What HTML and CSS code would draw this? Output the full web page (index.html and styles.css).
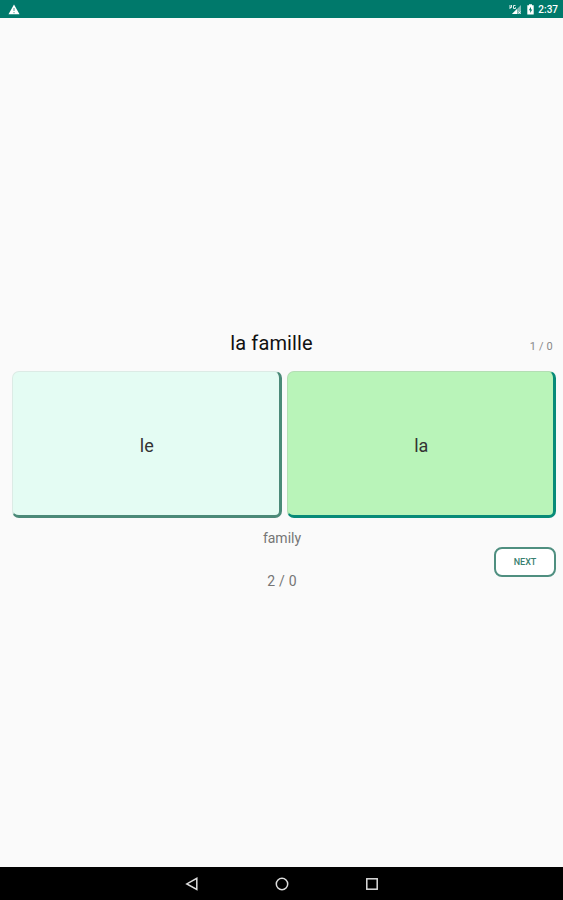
FILE: index.html
```
<!DOCTYPE html>
<html lang="fr">

  <head>
    <meta charset="utf-8">
    <title>la famille</title>
    <link rel="stylesheet" href="styles.css">
  </head>

  <body>
    <div class="statusbar">
      <svg class="warning" width="12" height="11" viewBox="0 0 12 11">
        <path d="M6 0.5L11.5 10.3H0.5Z" fill="#fff"/>
        <path d="M6 4v3M6 8v1.2" stroke="#66aaa2" stroke-width="1.2"/>
      </svg>
      <div class="status">
        <svg width="13" height="11" viewBox="0 0 13 11">
          <path d="M12 1V10H3Z" fill="#80bbb5"/>
          <path d="M8 5V10H3Z" fill="#fff"/>
          <path d="M1 1v4M1 3.5h1.5V1M6.5 1.5H4.5v3h2V3.3" fill="none" stroke="#e0f0ee" stroke-width="1"/>
          <path d="M9.5 7.5l2 2M11.5 7.5l-2 2" stroke="#fff" stroke-width="0.8"/>
        </svg>
        <svg class="battery" width="7" height="11" viewBox="0 0 7 11">
          <path d="M2 0.3h3v1h1.7v9.2H0.3V1.3H2Z" fill="#fff"/>
          <path d="M4 2.8L1.8 6.3H3.2V9L5.3 5.4H4Z" fill="#00796b"/>
        </svg>
        <span class="time">2:37</span>
      </div>
    </div>

    <div class="quiz">
      <div class="top">
        <h1>la famille</h1>
        <span class="score">1 / 0</span>
      </div>

      <div class="answers">
        <button class="answer le">le</button>
        <button class="answer la">la</button>
      </div>

      <div class="bottom">
        <div class="result">
          <p class="translation">family</p>
          <p class="count">2 / 0</p>
        </div>
        <button class="next">NEXT</button>
      </div>
    </div>

    <div class="navbar">
      <svg width="14" height="14" viewBox="0 0 14 14"><path d="M11.8 1.3V12.4L1.8 6.9Z"/></svg>
      <svg width="14" height="14" viewBox="0 0 14 14"><circle cx="7" cy="7" r="5.7"/></svg>
      <svg width="14" height="14" viewBox="0 0 14 14"><rect x="1.8" y="1.8" width="10.4" height="10.4"/></svg>
    </div>
  </body>
</html>
```
FILE: styles.css
```
body {
  display: flex;
  flex-direction: column;
  height: 900px;
  margin: 0;
  background-color: #fafafa;
  font-family: Roboto, sans-serif;
}

h1, p {
  margin: 0;
  font-weight: normal;
}

button {
  box-sizing: border-box;
  padding: 0;
  font-family: inherit;
}

.statusbar {
  display: flex;
  justify-content: space-between;
  align-items: center;
  box-sizing: border-box;
  height: 18px;
  padding: 0 5px 0 8px;
  background-color: #00796b;
}

.status {
  display: flex;
  align-items: center;
}

.battery {
  margin: 0 4px 0 5px;
}

.time {
  padding-top: 1px;
  color: white;
  font-size: 10px;
  font-weight: 500;
  line-height: 17px;
}

.quiz {
  flex: 1;
  padding: 312px 7px 0 12px;
}

.top {
  display: grid;
  grid-template-columns: 60px 1fr 60px;
  height: 41px;
}

.top h1 {
  grid-column: 2;
  color: #111;
  font-size: 20px;
  line-height: 26px;
  letter-spacing: 0.1px;
  text-align: center;
  margin-right: 25px;
}

.score {
  padding: 10px 3px 0 0;
  color: #888;
  font-size: 11px;
  line-height: 14px;
  letter-spacing: 0.2px;
  text-align: right;
}

.answers {
  display: grid;
  grid-template-columns: 1fr 1fr;
  gap: 5px;
}

.answer {
  height: 147px;
  padding: 4px 0 0 2px;
  border-style: solid;
  border-width: 1px 3px 3px 1px;
  border-radius: 7px;
  color: #333;
  font-size: 18px;
}

.le {
  background-color: #e4fcf3;
  border-color: #dcebe5 #4b8a78 #4b8a78 #dcebe5;
}

.la {
  background-color: #b9f4b9;
  border-color: #b4deb4 #078b78 #078b78 #b4deb4;
}

.bottom {
  display: grid;
  grid-template-columns: 62px 1fr 62px;
}

.result {
  grid-column: 2;
  padding-top: 10px;
  color: #757575;
  text-align: center;
}

.translation {
  margin-right: 4px;
  font-size: 14px;
  line-height: 20px;
}

.count {
  margin: 23px 4px 0 0;
  font-size: 14px;
  line-height: 20px;
  letter-spacing: 0.2px;
}

.next {
  height: 30px;
  margin-top: 29px;
  background-color: white;
  border: 2px solid #4f8f80;
  border-radius: 8px;
  color: #39806f;
  font-size: 9px;
  font-weight: 500;
}

.navbar {
  display: flex;
  justify-content: center;
  align-items: center;
  gap: 76px;
  height: 33px;
  background-color: black;
}

.navbar svg {
  fill: none;
  stroke: #ddd;
  stroke-width: 1.5;
}
```
